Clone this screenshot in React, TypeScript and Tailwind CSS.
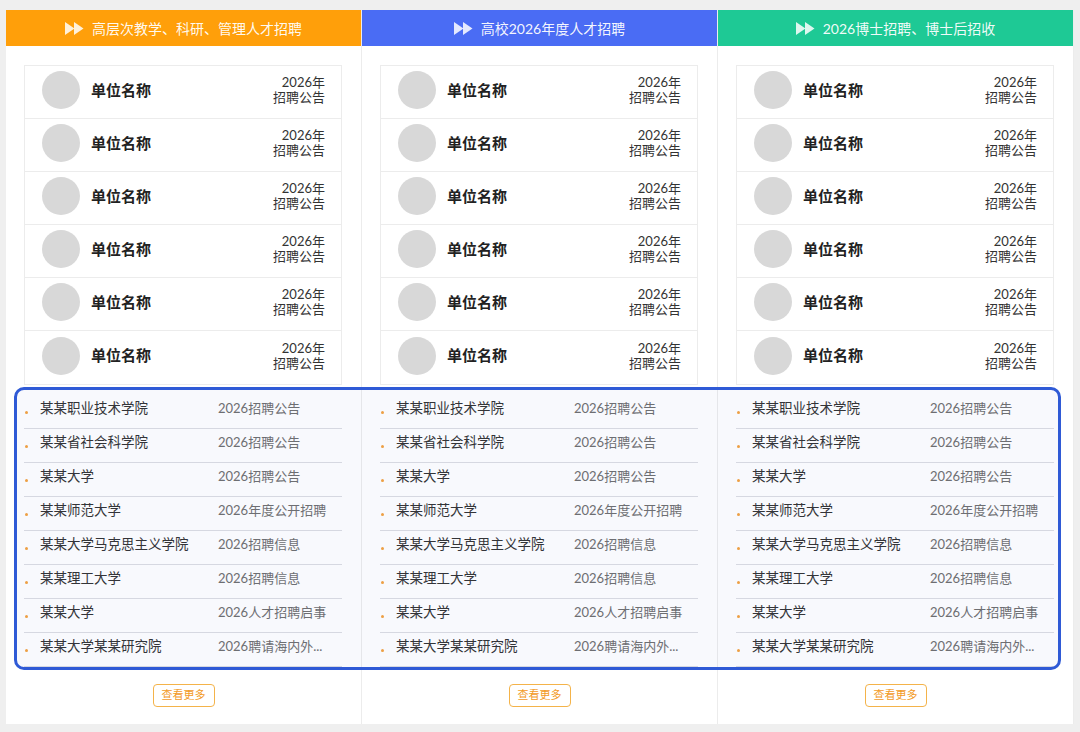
const font = "font-['Lato','Noto_Sans_CJK_SC',sans-serif]";

interface Column {
  title: string;
  color: string;
}

const columns: Column[] = [
  { title: "高层次教学、科研、管理人才招聘", color: "bg-[#ff9f0a]" },
  { title: "高校2026年度人才招聘", color: "bg-[#4a6cf4]" },
  { title: "2026博士招聘、博士后招收", color: "bg-[#1ec995]" },
];

const news = [
  ["某某职业技术学院", "2026招聘公告"],
  ["某某省社会科学院", "2026招聘公告"],
  ["某某大学", "2026招聘公告"],
  ["某某师范大学", "2026年度公开招聘"],
  ["某某大学马克思主义学院", "2026招聘信息"],
  ["某某理工大学", "2026招聘信息"],
  ["某某大学", "2026人才招聘启事"],
  ["某某大学某某研究院", "2026聘请海内外..."],
];

function ForwardIcon() {
  return (
    <svg width="19" height="13" viewBox="0 0 19 13" className="shrink-0">
      <path d="M0 0 L9.5 6.5 L0 13 Z" fill="#fff" fillOpacity="0.85" />
      <path d="M9 0 L18.5 6.5 L9 13 Z" fill="#fff" fillOpacity="0.85" />
    </svg>
  );
}

function Panel({ column }: { column: Column }) {
  return (
    <div className="w-[356px] h-full flex flex-col border-r border-[#ececec] last:border-r-0">
      <div
        className={`${column.color} h-9 flex items-center justify-center gap-2 text-white text-[14px]`}
      >
        <ForwardIcon />
        <span className="text-white/95">{column.title}</span>
      </div>

      <div className="pl-[18px] pr-[19px] pt-[19px]">
        <div className="border border-[#ececec]">
          {Array.from({ length: 6 }, (_, i) => (
            <div
              key={i}
              className="h-[53px] flex items-center pl-[17px] pr-[16px] pb-[4px] border-b border-[#ececec] last:border-b-0"
            >
              <div className="w-[38px] h-[38px] rounded-full bg-[#d8d8d8]" />
              <div className="ml-[11px] flex-1 text-[15px] font-bold text-[#222]">
                单位名称
              </div>
              <div className="text-right text-[13px] leading-[15px] text-[#333]">
                <div>2026年</div>
                <div>招聘公告</div>
              </div>
            </div>
          ))}
        </div>

        <div className="pt-[10px]">
          {news.map(([name, date], i) => (
            <div
              key={i}
              className="h-[34px] flex items-start border-b border-[#dcdde2] relative"
            >
              <span className="absolute left-[1px] top-[16px] w-[3px] h-[3px] rounded-full bg-[#f4a340]" />
              <span className="ml-[16px] w-[178px] pt-[3px] text-[13.5px] leading-5 text-[#333] whitespace-nowrap">
                {name}
              </span>
              <span className="pt-[3px] text-[13px] leading-5 text-[#6f6f6f] whitespace-nowrap">
                {date}
              </span>
            </div>
          ))}
        </div>
      </div>

      <div className="flex justify-center mt-[17px]">
        <button className="w-[62px] h-[23px] border border-[#f4b34a] rounded-[4px] text-[11px] text-[#f29a1f] bg-white">
          查看更多
        </button>
      </div>
    </div>
  );
}

export default function App() {
  return (
    <div className={`${font} w-[1080px] h-[732px] bg-[#efefef] pt-[10px] pl-[6px]`}>
      <div className="relative w-[1068px] h-[714px] bg-white flex">
        {columns.map((c) => (
          <Panel key={c.title} column={c} />
        ))}
        <div className="absolute left-[8px] top-[377px] w-[1047px] h-[283px] border-[3px] border-[#2f5ad6] rounded-[10px] bg-[#3355cc]/[0.035] pointer-events-none" />
      </div>
    </div>
  );
}
